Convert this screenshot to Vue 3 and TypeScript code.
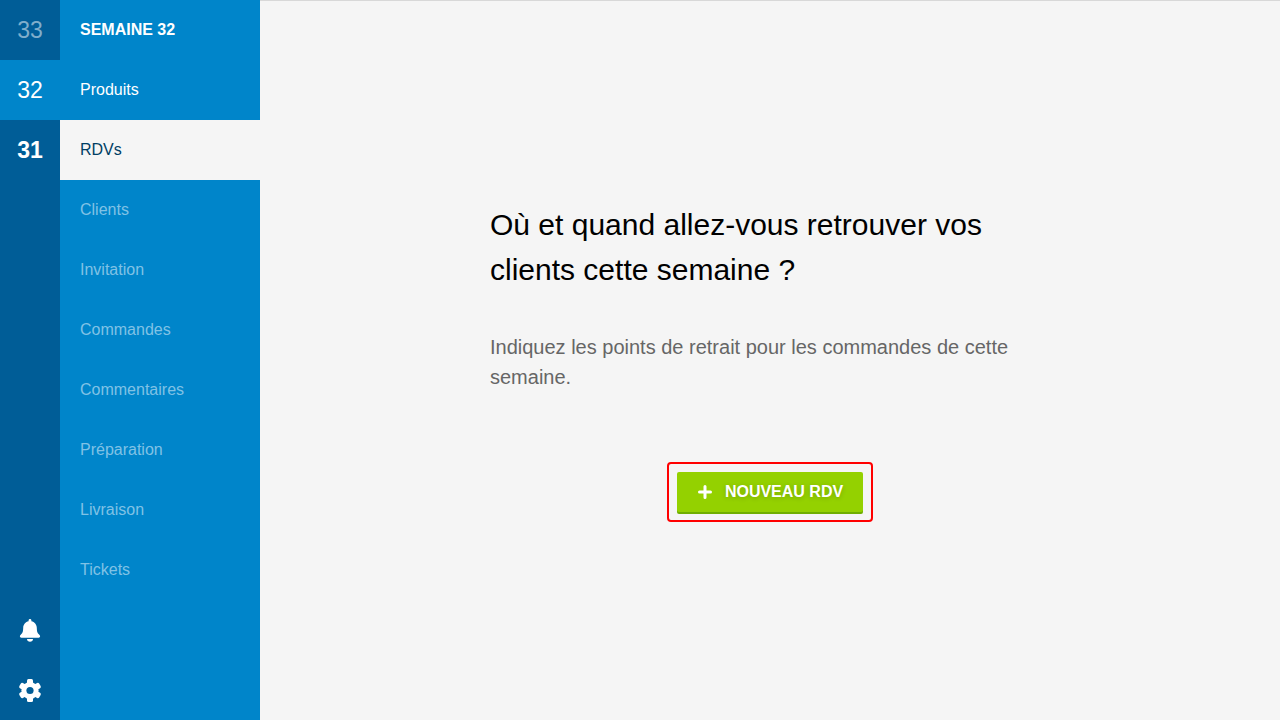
<script setup lang="ts">
interface Week {
  label: string
  state: 'upcoming' | 'selected' | 'current'
}

interface Section {
  label: string
  state: 'ready' | 'active' | 'pending'
}

const weeks: Week[] = [
  { label: '33', state: 'upcoming' },
  { label: '32', state: 'selected' },
  { label: '31', state: 'current' },
]

const sections: Section[] = [
  { label: 'Produits', state: 'ready' },
  { label: 'RDVs', state: 'active' },
  { label: 'Clients', state: 'pending' },
  { label: 'Invitation', state: 'pending' },
  { label: 'Commandes', state: 'pending' },
  { label: 'Commentaires', state: 'pending' },
  { label: 'Préparation', state: 'pending' },
  { label: 'Livraison', state: 'pending' },
  { label: 'Tickets', state: 'pending' },
]
</script>

<template>
  <div class="app">
    <nav class="weeks" aria-label="Semaines">
      <a v-for="week in weeks" :key="week.label" href="#" class="week" :class="week.state">{{ week.label }}</a>
      <div class="tools">
        <button type="button" class="tool" aria-label="Notifications">
          <svg width="24" height="24" viewBox="0 0 24 24" fill="#fff" aria-hidden="true">
            <path d="M12 1c.8 0 1.400.6 1.400 1.400v.8c3.100.7 5.300 3.200 5.400 6.500.1 3.800.5 5.100 2.500 7.100.5.500.8.9.8 1.500 0 .8-.6 1.400-1.400 1.400H3.300c-.8 0-1.400-.6-1.400-1.400 0-.6.3-1 .8-1.500 2-2 2.400-3.300 2.500-7.100.1-3.300 2.300-5.800 5.400-6.500v-.8C10.600 1.600 11.200 1 12 1z" />
            <path d="M9 21h6c0 1.700-1.300 2.800-3 2.800S9 22.700 9 21z" />
          </svg>
        </button>
        <button type="button" class="tool" aria-label="Paramètres">
          <svg width="24" height="24" viewBox="0 0 24 24" fill="#fff" aria-hidden="true">
            <circle cx="12" cy="12.500" r="8.600" />
            <rect x="9" y="1.100" width="6" height="22.800" rx="1.500" />
            <rect x="9" y="1.100" width="6" height="22.800" rx="1.500" transform="rotate(60 12 12.500)" />
            <rect x="9" y="1.100" width="6" height="22.800" rx="1.500" transform="rotate(120 12 12.500)" />
            <circle cx="12" cy="12.500" r="3.600" fill="#005d97" />
          </svg>
        </button>
      </div>
    </nav>

    <nav class="sections" aria-label="Semaine 32">
      <h2 class="title">SEMAINE 32</h2>
      <a v-for="section in sections" :key="section.label" href="#" class="section" :class="section.state">{{ section.label }}</a>
    </nav>

    <main class="content">
      <div class="intro">
        <h1>Où et quand allez-vous retrouver vos clients cette semaine ?</h1>
        <p>Indiquez les points de retrait pour les commandes de cette semaine.</p>
        <div class="highlight">
          <button type="button" class="create">
            <svg width="16" height="16" viewBox="0 0 16 16" fill="none" stroke="#fff" stroke-width="3" stroke-linecap="round" aria-hidden="true">
              <path d="M8 2.500v11M2.500 8h11" />
            </svg>
            <span>NOUVEAU RDV</span>
          </button>
        </div>
      </div>
    </main>
  </div>
</template>

<style>
body {
  margin: 0;
}
</style>

<style scoped>
.app {
  display: flex;
  min-height: 100vh;
  background: #f5f5f5;
  font-family: "Liberation Sans", Arial, sans-serif;
  font-size: 16px;
}

.weeks {
  display: flex;
  flex-direction: column;
  flex: 0 0 60px;
  background: #005d97;
}

.week {
  line-height: 60px;
  font-size: 23px;
  text-align: center;
  text-decoration: none;
  color: #fff;
}

.week.upcoming {
  color: #80aecb;
}

.week.selected {
  background: #0085ca;
}

.week.current {
  font-weight: bold;
}

.tools {
  margin-top: auto;
}

.tool {
  display: flex;
  align-items: center;
  justify-content: center;
  width: 100%;
  height: 60px;
  padding: 0;
  border: 0;
  background: none;
  cursor: pointer;
}

.sections {
  flex: 0 0 200px;
  background: #0085ca;
}

.title,
.section {
  display: block;
  margin: 0;
  padding: 0 20px;
  line-height: 60px;
  font-size: 16px;
  color: #fff;
  text-decoration: none;
}

.section.active {
  background: #f5f5f5;
  color: #003e64;
}

.section.pending {
  color: #80c2e5;
}

.content {
  display: flex;
  flex: 1;
  align-items: center;
  justify-content: center;
  padding: 2px 20px 0;
  border-top: 1px solid #d8d8d8;
}

.intro {
  display: flex;
  flex-direction: column;
  width: 100%;
  max-width: 560px;
}

h1 {
  margin: 0 0 40px;
  font-size: 30px;
  font-weight: normal;
  line-height: 45px;
  color: #000;
}

p {
  margin: 0 0 70px;
  font-size: 20px;
  line-height: 30px;
  color: #666;
}

.highlight {
  align-self: center;
  padding: 8px;
  border: 2px solid #f00;
  border-radius: 4px;
}

.create {
  display: flex;
  align-items: center;
  gap: 12px;
  height: 40px;
  padding: 0 20px;
  border: 0;
  border-radius: 2px;
  background: #94d100;
  box-shadow: 0 2px 0 #6fae00;
  font-family: inherit;
  font-size: 16px;
  font-weight: bold;
  color: #fff;
  text-shadow: 0 1px 5px rgba(0, 0, 0, 0.2);
  cursor: pointer;
}
</style>
